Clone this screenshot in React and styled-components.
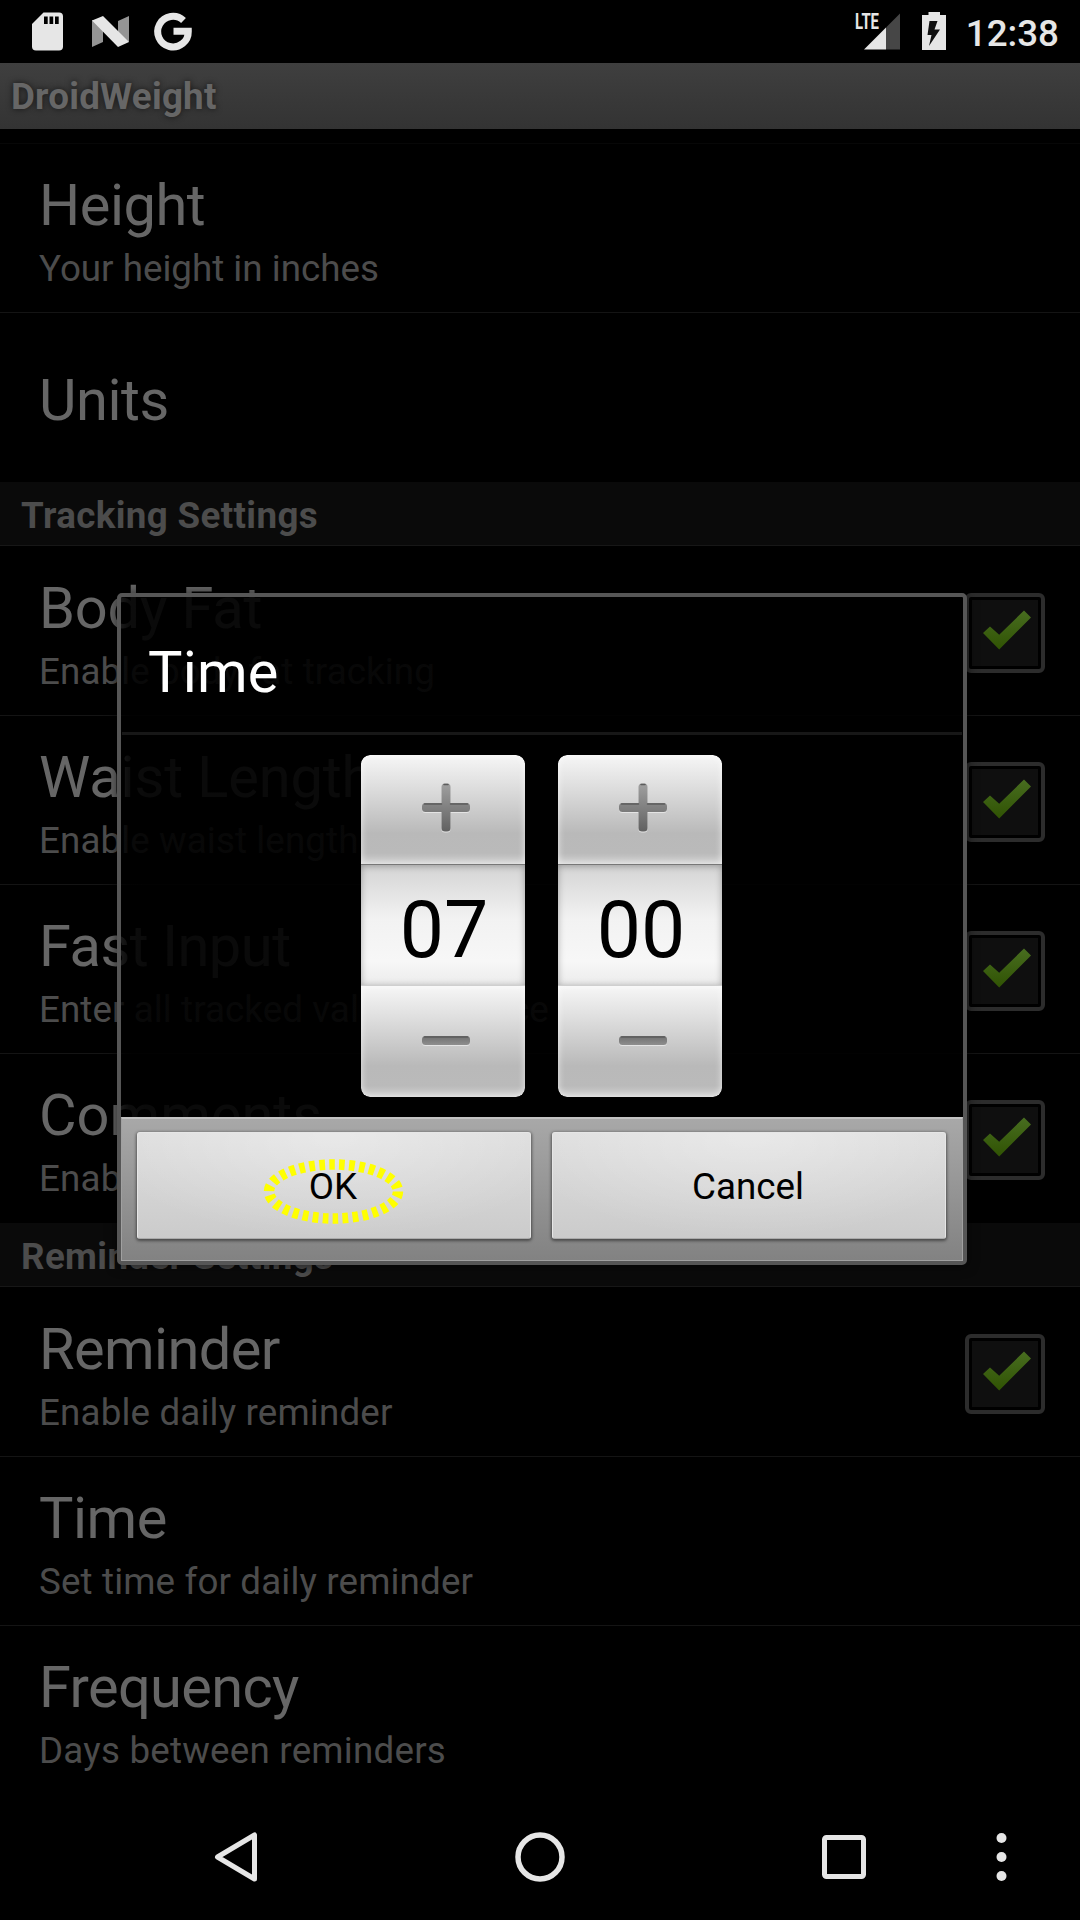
import React from "react";
import styled, { createGlobalStyle } from "styled-components";

const Global = createGlobalStyle`
  html, body { margin: 0; padding: 0; background: #000; }
  * { box-sizing: border-box; }
`;

const Screen = styled.div`
  position: relative;
  width: 1080px;
  height: 1920px;
  overflow: hidden;
  display: flex;
  flex-direction: column;
  background: #000;
  font-family: Roboto, "Liberation Sans", sans-serif;
`;

const StatusBar = styled.header`
  height: 63px;
  display: flex;
  justify-content: space-between;
  align-items: center;
  padding: 0 21px 0 32px;
  color: #e6e6e6;
`;

const StatusGroup = styled.div`
  display: flex;
  align-items: center;
  gap: ${(p) => p.$gap}px;
`;

const Clock = styled.span`
  font-size: 36.75px;
  line-height: 43px;
  font-weight: 500;
  padding-top: 3px;
`;

const TitleBar = styled.div`
  height: 66px;
  padding: 1px 11px 0;
  background: linear-gradient(#3f3f3f, #333);
  color: #666;
  font-size: 36.75px;
  font-weight: 700;
  line-height: 66px;
  letter-spacing: 0.22px;
  text-shadow: 0 0 6px rgba(0, 0, 0, 0.65);
`;

const List = styled.main`
  flex: 1;
  min-height: 0;
  padding-top: 14px;
`;

const TopRule = styled.div`
  height: 1px;
  background: #070707;
`;

const SectionHeader = styled.h2`
  margin: 0;
  height: 64px;
  padding: 2px 21px 0;
  background: #0a0a0a;
  border-bottom: 1px solid #171717;
  color: #4c4c4c;
  font-size: 36.75px;
  font-weight: 700;
  line-height: 64px;
  letter-spacing: 0.36px;
`;

const Row = styled.div`
  height: 169px;
  display: flex;
  align-items: center;
  justify-content: space-between;
  padding: ${(p) => (p.$single ? 5 : 3)}px 35px 0 39px;
  border-bottom: 1px solid ${(p) => (p.$last ? "transparent" : "#141414")};

  ${SectionHeader} + & {
    height: 170px;
    padding-top: 4px;
  }
`;

const RowText = styled.div`
  display: flex;
  flex-direction: column;
  white-space: nowrap;
`;

const RowTitle = styled.span`
  color: #666;
  font-size: 57.75px;
  line-height: 76px;
  letter-spacing: ${(p) => p.$tracking}px;
`;

const RowSummary = styled.span`
  margin-top: 1px;
  color: #4c4c4c;
  font-size: 36.75px;
  line-height: 49px;
  letter-spacing: ${(p) => p.$tracking}px;
`;

const CheckFrame = styled.div`
  width: 80px;
  height: 80px;
  margin-top: 1px;
  padding: 3px;
  border: 4px solid #2c2c2c;
  border-radius: 6px;
  background: #0f0f0f content-box;
  svg { display: block; }
`;

const NavBar = styled.nav`
  height: 126px;
  flex-shrink: 0;
  display: flex;
  align-items: center;
  padding-left: 214px;
  svg { display: block; }
`;

const NavItem = styled.div`
  width: ${(p) => p.$w}px;
`;

const Dialog = styled.section`
  position: absolute;
  left: 117px;
  top: 593px;
  width: 850px;
  height: 672px;
  display: flex;
  flex-direction: column;
  border: 4px solid #565656;
  border-radius: 5px;
  background: linear-gradient(90deg, rgba(0,0,0,.76), rgba(0,0,0,.88) 8px, rgba(0,0,0,.9) 26px, rgba(0,0,0,.9)) padding-box;
  box-shadow: 0 1px 12px rgba(0, 0, 0, 0.6);
`;

const DialogTitle = styled.h1`
  margin: 0 1px;
  height: 138px;
  padding: 5px 0 0 26px;
  border-bottom: 3px solid #171717;
  color: #fff;
  font-size: 57.75px;
  font-weight: 400;
  line-height: 141px;
  letter-spacing: 0.2px;
`;

const Pickers = styled.div`
  flex: 1;
  display: flex;
  gap: 33px;
  padding: 20px 0 0 240px;
`;

const Picker = styled.div`
  width: 164px;
  height: 342px;
  display: flex;
  flex-direction: column;
  border-radius: 9px;
  overflow: hidden;
`;

const StepButton = styled.div`
  height: ${(p) => (p.$minus ? 111 : 109)}px;
  display: flex;
  justify-content: center;
  padding: ${(p) => (p.$minus ? "25px" : "23px")} 0 0 6px;
  background: linear-gradient(#f6f6f6, #dfdfdf 28%, #b9b9b9 72%, #bababa 90%, #d2d2d2);
  box-shadow: inset 0 0 6px 1px rgba(255, 255, 255, 0.55);
  border-radius: ${(p) => (p.$minus ? "0 0 9px 9px" : "9px 9px 0 0")};
`;

const Value = styled.div`
  height: 122px;
  padding: 5px 0 0 2px;
  border-top: 1px solid #777;
  border-bottom: 1px solid #cfcfcf;
  background: linear-gradient(#d4d4d4, #f2f2f2 45%, #f7f7f7 80%, #ececec);
  box-shadow: inset 0 1px 7px rgba(0, 0, 0, 0.3);
  color: #000;
  font-size: 78.75px;
  line-height: 120px;
  text-align: center;
`;

const ButtonBar = styled.div`
  height: 144px;
  display: flex;
  gap: 21px;
  padding: 13px 16px 0 15px;
  border: 1px solid #a0a0a0;
  border-top: 2px solid #c2c2c2;
  background: linear-gradient(#a8a8a8, #828282);
`;

const DialogButton = styled.div`
  position: relative;
  flex: 1;
  height: 107px;
  padding-right: 2px;
  border: 1px solid #e6e6e6;
  border-bottom-color: #aaa;
  border-radius: 3px;
  background: radial-gradient(ellipse 62% 100% at 50% 0, rgba(255,255,255,.35), transparent), linear-gradient(#dedede, #cbcbcb);
  box-shadow: 0 1px 3px 1px rgba(0, 0, 0, 0.45);
  color: #000;
  font-size: 36.75px;
  line-height: 107px;
  text-align: center;
`;

const Marker = styled.svg`
  position: absolute;
  left: 124px;
  top: 23px;
`;

const Check = () => (
  <svg width="66" height="66" viewBox="0 0 66 66">
    <defs>
      <linearGradient id="tick" x1="0" y1="0" x2="0" y2="1">
        <stop offset="0" stopColor="#486d20" />
        <stop offset="1" stopColor="#305303" />
      </linearGradient>
    </defs>
    <path d="M11 33L18 26.500L27.200 34.800L52 10.500L59 17.500L27.200 49.500Z" fill="url(#tick)" />
  </svg>
);

const Item = ({ title, titleTracking = -0.45, summary, tracking = 0.16, checked, last }) => (
  <Row $single={!summary} $last={last}>
    <RowText>
      <RowTitle $tracking={titleTracking}>{title}</RowTitle>
      {summary && <RowSummary $tracking={tracking}>{summary}</RowSummary>}
    </RowText>
    {checked && (
      <CheckFrame>
        <Check />
      </CheckFrame>
    )}
  </Row>
);

const StepGlyph = ({ minus, id }) => (
  <svg width="52" height="60" viewBox="0 0 52 60">
    <defs>
      <linearGradient id={id} gradientUnits="userSpaceOnUse" x1="0" y1={minus ? 24 : 4} x2="0" y2={minus ? 36 : 54}>
        <stop offset="0" stopColor={minus ? "#6c6c6c" : "#a2a2a2"} />
        <stop offset="1" stopColor={minus ? "#959595" : "#606060"} />
      </linearGradient>
    </defs>
    <g fill="#e4e4e4" transform="translate(0 1)">
      <rect x="2" y="25" width="48" height="9" rx="3.500" />
      {!minus && <rect x="21.500" y="5.500" width="9" height="48" rx="3.500" />}
    </g>
    <g fill={`url(#${id})`}>
      <rect x="2" y="25" width="48" height="9" rx="3.500" />
      {!minus && <rect x="21.500" y="5.500" width="9" height="48" rx="3.500" />}
    </g>
    <path
      d={minus ? "M4.500 26H47.500" : "M4.500 26H21.500M30.500 26H47.500M24 6.500H28"}
      stroke="#5c5c5c"
      strokeWidth="1.500"
      strokeLinecap="round"
    />
  </svg>
);

const NumberPicker = ({ value, id }) => (
  <Picker>
    <StepButton>
      <StepGlyph id={`${id}-inc`} />
    </StepButton>
    <Value>{value}</Value>
    <StepButton $minus>
      <StepGlyph id={`${id}-dec`} minus />
    </StepButton>
  </Picker>
);

export default function App() {
  return (
    <>
      <Global />
      <Screen>
        <StatusBar>
          <StatusGroup $gap={0}>
            <svg width="170" height="63" viewBox="32 0 170 63">
              <path d="M43.500 12.500H59a4 4 0 0 1 4 4V46.500a4 4 0 0 1-4 4H36a4 4 0 0 1-4-4V24Z" fill="#e6e6e6" />
              <path d="M44 16.500h3.700v7.500H44zM49.500 16.500h3.700v7.500h-3.700zM55 16.500h3.700v7.500H55z" fill="#000" />
              <path d="M92 20V47L103 42V25ZM129 16V42L118 37V21Z" fill="#949494" />
              <path d="M92 20.500L103 16L129 42L118 47Z" fill="#e6e6e6" />
              <path
                d="M183.500 20.500A15.300 15.300 0 1 0 188.300 31.300H173.500"
                fill="none"
                stroke="#e6e6e6"
                strokeWidth="7"
              />
            </svg>
          </StatusGroup>
          <StatusGroup $gap={20}>
            <svg width="92" height="63" viewBox="854 0 92 63">
              <text
                x="855"
                y="29"
                fill="#e6e6e6"
                fontSize="21.500"
                fontWeight="700"
                textLength="24"
                lengthAdjust="spacingAndGlyphs"
              >
                LTE
              </text>
              <path d="M886 27.500L900 13.500V49.500H886Z" fill="#464646" />
              <path d="M864 49.500L886 27.500V49.500Z" fill="#e6e6e6" />
              <path d="M928.500 12h11.500v3h6v35h-24V15h6.500Z" fill="#e6e6e6" />
              <path d="M929.500 21H937.500L934.500 29.500H940L929 46L931.500 35H927.500Z" fill="#111" />
            </svg>
            <Clock>12:38</Clock>
          </StatusGroup>
        </StatusBar>
        <TitleBar>DroidWeight</TitleBar>
        <List>
          <TopRule />
          <Item title="Height" summary="Your height in inches" tracking={0} />
          <Item title="Units" last />
          <SectionHeader>Tracking Settings</SectionHeader>
          <Item title="Body Fat" titleTracking={-0.15} summary="Enable body fat tracking" tracking={0.1} checked />
          <Item title="Waist Length" titleTracking={-0.1} summary="Enable waist length tracking" tracking={0.1} checked />
          <Item title="Fast Input" summary="Enter all tracked values at once" tracking={0.08} checked />
          <Item title="Comments" titleTracking={0} summary="Enable comments" checked last />
          <SectionHeader>Reminder Settings</SectionHeader>
          <Item title="Reminder" titleTracking={-0.6} summary="Enable daily reminder" checked />
          <Item title="Time" summary="Set time for daily reminder" tracking={0.14} />
          <Item title="Frequency" titleTracking={-0.65} summary="Days between reminders" tracking={0.22} last />
        </List>
        <NavBar>
          <NavItem $w={301}>
            <svg width="44" height="52" viewBox="0 0 44 52">
              <path d="M3.500 26L40.500 4V48Z" fill="none" stroke="#e6e6e6" strokeWidth="5" strokeLinejoin="round" />
            </svg>
          </NavItem>
          <NavItem $w={307}>
            <svg width="50" height="50" viewBox="0 0 50 50">
              <circle cx="25" cy="25" r="22" fill="none" stroke="#e6e6e6" strokeWidth="5.500" />
            </svg>
          </NavItem>
          <NavItem $w={173}>
            <svg width="44" height="44" viewBox="0 0 44 44">
              <rect x="2.500" y="2.500" width="39" height="39" rx="2" fill="none" stroke="#e6e6e6" strokeWidth="5" />
            </svg>
          </NavItem>
          <NavItem $w={12}>
            <svg width="12" height="50" viewBox="0 0 12 50">
              <g fill="#e6e6e6">
                <circle cx="6.500" cy="6" r="5" />
                <circle cx="6.500" cy="25" r="5" />
                <circle cx="6.500" cy="44" r="5" />
              </g>
            </svg>
          </NavItem>
        </NavBar>
        <Dialog>
          <DialogTitle>Time</DialogTitle>
          <Pickers>
            <NumberPicker id="hour" value="07" />
            <NumberPicker id="minute" value="00" />
          </Pickers>
          <ButtonBar>
            <DialogButton>
              OK
              <Marker width="144" height="70" viewBox="0 0 144 70">
                <ellipse
                  cx="71.500"
                  cy="35.500"
                  rx="64.500"
                  ry="27"
                  fill="none"
                  stroke="#ffff00"
                  strokeWidth="10.500"
                  strokeDasharray="5.700 4.300"
                />
              </Marker>
            </DialogButton>
            <DialogButton>Cancel</DialogButton>
          </ButtonBar>
        </Dialog>
      </Screen>
    </>
  );
}
